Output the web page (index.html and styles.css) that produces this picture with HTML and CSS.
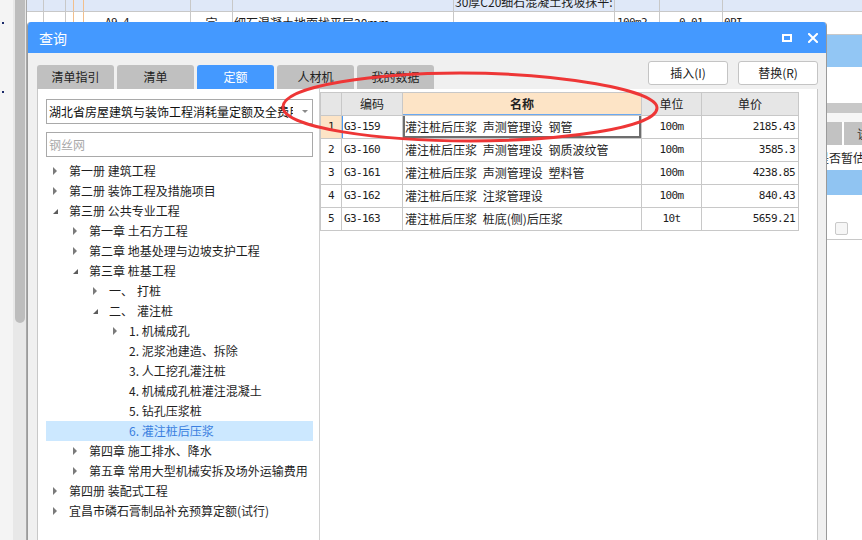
FILE: index.html
```html
<!DOCTYPE html>
<html lang="zh-CN">
<head>
<meta charset="utf-8">
<title>查询</title>
<link rel="stylesheet" href="styles.css">
</head>
<body>
<div class="app">
  <div class="strip"><i class="dot dot-a"></i><i class="dot dot-b"></i></div>
  <div class="vscroll"><div class="thumb"></div></div>
  <div class="sheet">
    <div class="srow srow-a">
      <div class="sc w1"></div><div class="sc w2"></div><div class="sc w3 orange"></div><div class="sc w4 orange"></div><div class="sc w5"></div><div class="sc w6"></div><div class="sc w7"></div><div class="sc w8 pl1">30厚C20细石混凝土找坡抹平:</div><div class="sc w9"></div><div class="sc w10"></div><div class="sc w11"></div>
    </div>
    <div class="srow srow-b">
      <div class="sc w1"></div><div class="sc w2"></div><div class="sc w3 orange"></div><div class="sc w4 orange"></div><div class="sc w5 pl21 mono">A9-4</div><div class="sc w6 ctr">宗</div><div class="sc w7 pl1">细石混凝土地面找平层30mm</div><div class="sc w8"></div><div class="sc w9 pl2 mono">100m2</div><div class="sc w10 ctr mono">0.01</div><div class="sc w11 pl1 mono">0PI</div>
    </div>
    <div class="s-sel"></div>
    <div class="s-gap1"></div>
    <div class="s-bar"></div>
    <div class="s-gap2"></div>
    <div class="s-tabs"><span class="sep"></span><span class="lbl">该</span></div>
    <div class="s-head">是否暂估</div>
    <div class="s-blue"></div>
    <div class="s-chk"><span class="chk"></span></div>
  </div>
</div>

<div class="dialog">
  <div class="titlebar">
    <span class="ttl">查询</span>
    <span class="tctl">
      <svg width="10" height="8" viewBox="0 0 10 8"><rect x="1" y="1" width="8" height="6" fill="none" stroke="#fff" stroke-width="2"/></svg>
      <svg width="10" height="10" viewBox="0 0 10 10"><path d="M1 1L9 9M9 1L1 9" stroke="#fff" stroke-width="2" stroke-linecap="square"/></svg>
    </span>
  </div>
  <div class="dbody">
    <div class="dhead">
      <div class="tabs">
        <div class="tab">清单指引</div>
        <div class="tab">清单</div>
        <div class="tab on">定额</div>
        <div class="tab">人材机</div>
        <div class="tab">我的数据</div>
      </div>
      <div class="btns">
        <button class="btn">插入(I)</button>
        <button class="btn">替换(R)</button>
      </div>
    </div>
    <div class="pane">
      <div class="left">
        <div class="combo"><span class="combo-text">湖北省房屋建筑与装饰工程消耗量定额及全费用基价表</span><span class="combo-arrow"></span></div>
        <div class="search">钢丝网</div>
        <div class="tree">
          <div class="tr l0"><span class="ar"></span>第一册 建筑工程</div>
          <div class="tr l0"><span class="ar"></span>第二册 装饰工程及措施项目</div>
          <div class="tr l0"><span class="ar open"></span>第三册 公共专业工程</div>
          <div class="tr l1"><span class="ar"></span>第一章 土石方工程</div>
          <div class="tr l1"><span class="ar"></span>第二章 地基处理与边坡支护工程</div>
          <div class="tr l1"><span class="ar open"></span>第三章 桩基工程</div>
          <div class="tr l2"><span class="ar"></span>一、<span class="gap"></span>打桩</div>
          <div class="tr l2"><span class="ar open"></span>二、<span class="gap"></span>灌注桩</div>
          <div class="tr l3"><span class="ar"></span>1. 机械成孔</div>
          <div class="tr l3"><span class="ar none"></span>2. 泥浆池建造、拆除</div>
          <div class="tr l3"><span class="ar none"></span>3. 人工挖孔灌注桩</div>
          <div class="tr l3"><span class="ar none"></span>4. 机械成孔桩灌注混凝土</div>
          <div class="tr l3"><span class="ar none"></span>5. 钻孔压浆桩</div>
          <div class="tr l3 sel"><span class="ar none"></span>6. 灌注桩后压浆</div>
          <div class="tr l1"><span class="ar"></span>第四章 施工排水、降水</div>
          <div class="tr l1"><span class="ar"></span>第五章 常用大型机械安拆及场外运输费用</div>
          <div class="tr l0"><span class="ar"></span>第四册 装配式工程</div>
          <div class="tr l0"><span class="ar"></span>宜昌市磷石膏制品补充预算定额(试行)</div>
        </div>
      </div>
      <div class="right">
        <div class="grid">
          <div class="g gh"></div><div class="g gh">编码</div><div class="g gh hot">名称</div><div class="g gh">单位</div><div class="g gh">单价</div>

          <div class="g rn hot mono">1</div><div class="g code mono mark">G3-159</div><div class="g nm cur">灌注桩后压浆 声测管理设 钢管</div><div class="g ut mono">100m</div><div class="g pr mono">2185.43</div>

          <div class="g rn mono">2</div><div class="g code mono">G3-160</div><div class="g nm">灌注桩后压浆 声测管理设 钢质波纹管</div><div class="g ut mono">100m</div><div class="g pr mono">3585.3</div>

          <div class="g rn mono">3</div><div class="g code mono">G3-161</div><div class="g nm">灌注桩后压浆 声测管理设 塑料管</div><div class="g ut mono">100m</div><div class="g pr mono">4238.85</div>

          <div class="g rn mono">4</div><div class="g code mono">G3-162</div><div class="g nm">灌注桩后压浆 注浆管理设</div><div class="g ut mono">100m</div><div class="g pr mono">840.43</div>

          <div class="g rn mono">5</div><div class="g code mono">G3-163</div><div class="g nm">灌注桩后压浆 桩底(侧)后压浆</div><div class="g ut mono">10t</div><div class="g pr mono">5659.21</div>
        </div>
      </div>
    </div>
  </div>
</div>

<svg class="annot" width="862" height="540" viewBox="0 0 862 540">
  <path d="M283,107 C283,85 380,73 460,73 C560,73 657,90 657,108 C657,128 560,141 470,141 C380,141 283,128 283,107 Z" fill="none" stroke="#ee3636" stroke-width="3"/>
</svg>
</body>
</html>
```

FILE: styles.css
```css
* { box-sizing: border-box; }

body {
  margin: 0;
  width: 862px;
  height: 540px;
  overflow: hidden;
  position: relative;
  font-family: "Noto Sans CJK SC", sans-serif;
  font-size: 12px;
  color: #1e1e1e;
  background: #fff;
}

/* ---------- background application ---------- */
.app { display: flex; height: 540px; }
.strip { width: 13px; flex: none; background: #f4f4f4; }
.dot { display: block; width: 2px; height: 2px; margin-left: 2px; background: #1a2a6a; }
.dot-a { margin-top: 22px; }
.dot-b { margin-top: 67px; }
.vscroll { width: 13px; flex: none; background: #e8e8e8; }
.thumb { margin-left: 2px; width: 10px; height: 323px; background: #bdbdbd; border-radius: 0 0 5px 5px; }
.sheet { flex: 1; min-width: 0; overflow: hidden; border-left: 1px solid #a8a8a8; background: #fff; }

.srow { display: flex; border-bottom: 1px solid #c8c8c8; }
.srow-a { height: 12px; background: #dfe8f8; }
.srow-b { height: 23px; }
.sc { flex: none; border-right: 1px solid #c8c8c8; white-space: nowrap; overflow: hidden; }
.srow-a .sc { display: flex; align-items: flex-end; line-height: 16px; padding-bottom: 1px; }
.srow-b .sc { line-height: 22px; }
.orange { border-right-color: #f2bf8c; }
.w1 { width: 17px; }
.w2 { width: 22px; }
.w3 { width: 8px; }
.w4 { width: 10px; }
.w5 { width: 107px; }
.w6 { width: 42px; }
.w7 { width: 221px; }
.w8 { width: 161px; }
.w9 { width: 45px; }
.w10 { width: 63px; }
.w11 { flex: 1; border-right: none; }
.pl1 { padding-left: 1px; }
.pl2 { padding-left: 2px; }
.pl21 { padding-left: 21px; }
.ctr { text-align: center; }

.mono {
  font-family: "DejaVu Sans Mono", monospace;
  font-size: 11px;
  letter-spacing: -0.6px;
}

.s-sel { height: 32px; background: #92c6f4; }
.s-gap1 { height: 36px; }
.s-bar { height: 10px; background: #c8c8c8; }
.s-gap2 { height: 9px; background: #f6f6f6; }
.s-tabs { height: 23px; display: flex; padding-left: 815px; background: #c2c2c2; }
.s-tabs .sep { width: 2px; flex: none; background: #fff; }
.s-tabs .lbl { margin-left: 13px; line-height: 23px; white-space: nowrap; color: #333; }
.s-head { height: 25px; line-height: 25px; padding-left: 790px; white-space: nowrap; }
.s-blue { height: 25px; background: #90c4f2; }
.s-chk { height: 45px; padding: 27px 0 0 808px; border-bottom: 1px solid #c8c8c8; }
.chk { display: block; width: 13px; height: 13px; border: 1px solid #c9c9c9; border-radius: 2px; background: #f6f6f6; }

/* ---------- dialog ---------- */
.dialog {
  position: absolute;
  left: 27px;
  top: 22px;
  width: 800px;
  height: 530px;
  display: flex;
  flex-direction: column;
  overflow: hidden;
  border: 1px solid #9a9a9a;
  border-top: none;
  border-radius: 4px 4px 0 0;
  background: #f0f0f0;
}
.titlebar {
  height: 31px;
  flex: none;
  display: flex;
  align-items: center;
  padding: 0 8px 0 11px;
  background: #4499ff;
  color: #fff;
}
.ttl { font-size: 14px; line-height: 20px; }
.tctl { margin-left: auto; display: flex; align-items: center; gap: 16px; }
.tctl svg { display: block; }

.dbody { flex: 1; min-height: 0; display: flex; flex-direction: column; padding: 8px 8px 0 9px; }
.dhead { height: 28px; flex: none; display: flex; }
.tabs { display: flex; gap: 3px; align-self: flex-end; }
.tab {
  width: 77px;
  height: 24px;
  line-height: 24px;
  text-align: center;
  background: #c0c0c0;
  border-radius: 3px 3px 0 0;
  color: #222;
}
.tab.on { background: #4499ff; color: #fff; }
.btns { margin-left: auto; display: flex; gap: 10px; align-self: flex-start; }
.btn {
  width: 80px;
  height: 24px;
  padding: 0;
  border: 1px solid #c4c4c4;
  border-radius: 3px;
  background: #fff;
  font: inherit;
  line-height: 22px;
  color: #222;
}

.pane {
  flex: 1;
  min-height: 0;
  display: flex;
  background: #fff;
  border-left: 1px solid #c8c8c8;
  border-right: 1px solid #c8c8c8;
}
.left { width: 282px; flex: none; padding: 10px 6px 0 8px; border-right: 1px solid #d0d0d0; }
.combo { height: 25px; display: flex; align-items: center; border: 1px solid #a9a9a9; background: #fff; }
.combo-text { width: 246px; padding-left: 2px; line-height: 23px; white-space: nowrap; overflow: hidden; color: #111; }
.combo-arrow {
  margin-left: 9px;
  width: 0;
  height: 0;
  border-left: 3px solid transparent;
  border-right: 3px solid transparent;
  border-top: 3px solid #8a8a8a;
}
.search { height: 25px; margin-top: 8px; padding-left: 2px; line-height: 23px; border: 1px solid #a9a9a9; color: #a9a9a9; }

.tree { margin-top: 4px; }
.tr { height: 20px; display: flex; align-items: center; line-height: 20px; white-space: nowrap; color: #1e1e1e; }
.l0 { padding-left: 7px; }
.l1 { padding-left: 27px; }
.l2 { padding-left: 47px; }
.l3 { padding-left: 67px; }
.tr.sel { background: #cce8ff; color: #3a7fe0; }
.ar { width: 16px; height: 20px; flex: none; display: block; }
.ar::before {
  content: "";
  display: block;
  width: 0;
  height: 0;
  margin-top: 6px;
  border-left: 4px solid #7a7a7a;
  border-top: 4px solid transparent;
  border-bottom: 4px solid transparent;
}
.ar.open::before {
  margin-top: 8px;
  border-left: 5px solid transparent;
  border-top: 0;
  border-bottom: 5px solid #5c5c5c;
}
.ar.none::before { display: none; }
.gap { display: inline-block; width: 4px; }

.right { flex: 1; padding-top: 3px; }
.grid {
  display: grid;
  width: max-content;
  grid-template-columns: 20px 60px 238px 59px 96px;
  grid-auto-rows: 22px;
  gap: 1px;
  padding: 1px;
  background: #c8c8c8;
}
.g { background: #fff; line-height: 22px; white-space: nowrap; overflow: hidden; }
.gh { background: #e6e6e6; text-align: center; color: #222; }
.gh.hot { background: #fde4c6; font-weight: bold; box-shadow: inset 0 -1px 0 #6aa9f2; }
.rn { text-align: center; }
.rn.hot { background: #fde4c6; }
.code { padding-left: 2px; }
.nm { padding-left: 2px; word-spacing: 3px; }
.ut { text-align: center; }
.pr { text-align: right; padding-right: 3px; }
.mark { box-shadow: inset 1px 0 0 #4b9bf5; }
.cur { box-shadow: inset 2px 0 0 #6e6e6e, inset -2px 0 0 #6e6e6e, inset 0 -2px 0 #6e6e6e; }

/* ---------- red hand annotation ---------- */
.annot { position: absolute; left: 0; top: 0; pointer-events: none; }
```
